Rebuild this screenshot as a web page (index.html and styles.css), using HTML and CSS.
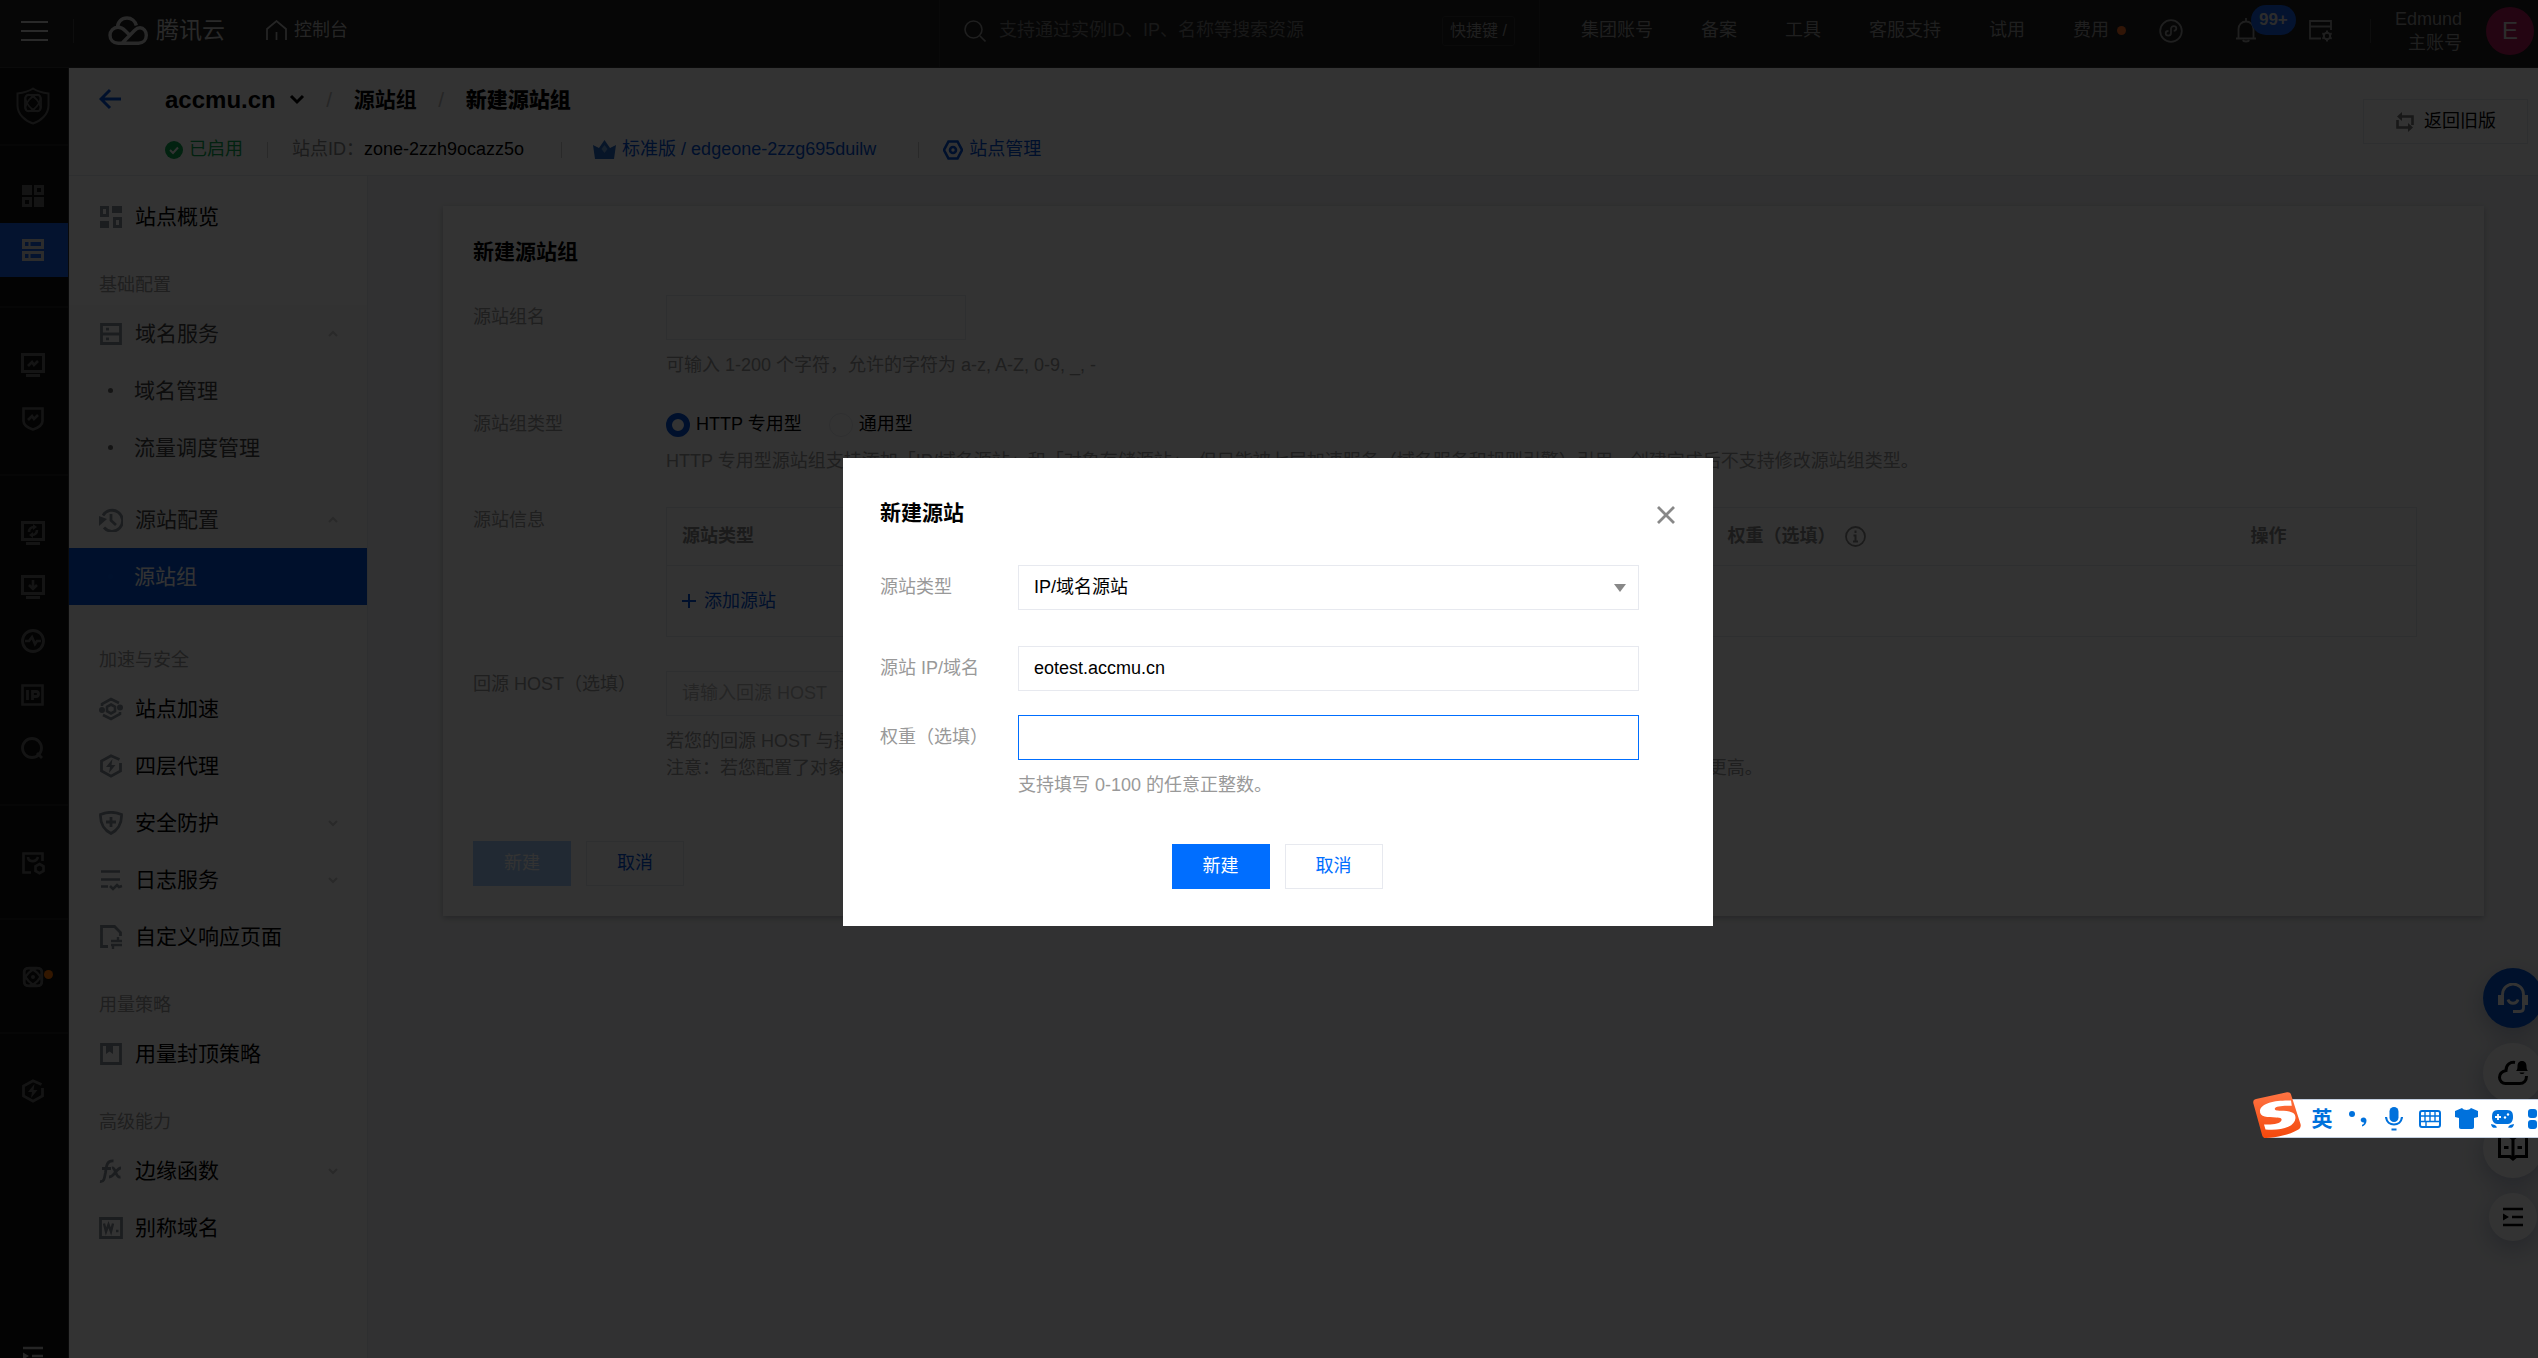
FILE: index.html
```html
<!DOCTYPE html>
<html lang="zh-CN">
<head>
<meta charset="utf-8">
<meta name="viewport" content="width=device-width, initial-scale=1">
<title>新建源站组 - 控制台</title>
<link rel="stylesheet" href="styles.css">
</head>
<body>
<svg class="defs" aria-hidden="true">
  <symbol id="i-monitor" viewBox="0 0 24 24"><path d="M1.500 1.500h21v17h-21zM5 22.500h14" fill="none" stroke="currentColor" stroke-width="3"/></symbol>
  <symbol id="i-bolt" viewBox="0 0 24 24"><path d="M20.500 5.500 12 1.800 2.500 7v10l9.500 5.200 9.500-5.200v-8" fill="none" stroke="currentColor" stroke-width="2.800"/><path d="m13.500 5-6.500 8h4l-1 6 6.500-8h-4z" fill="currentColor"/></symbol>
  <symbol id="i-down" viewBox="0 0 10 8"><path d="m1 2 4 4 4-4" fill="none" stroke="currentColor" stroke-width="2"/></symbol>
  <symbol id="i-up" viewBox="0 0 10 8"><path d="m1 6 4-4 4 4" fill="none" stroke="currentColor" stroke-width="2"/></symbol>
  <symbol id="i-indent" viewBox="0 0 20 20"><path d="M0 2h20M9 10h11M0 18h20" fill="none" stroke="currentColor" stroke-width="2.400"/><path d="M0 6.500 6 10l-6 3.500z" fill="currentColor"/></symbol>
</svg>

<header class="topbar">
  <button class="icon-btn burger" aria-label="菜单"><svg width="27" height="22" viewBox="0 0 27 22"><path d="M0 2h27M0 11h27M0 20h27" stroke="currentColor" stroke-width="2"/></svg></button>
  <span class="vline"></span>
  <a class="brand" href="#">
    <svg width="40" height="29" viewBox="0 0 40 29"><path d="M10 27.200C5 27 2 23.500 2 19.300c0-4.500 3.500-8 8-8 3 0 5 1.200 7.500 3.700l4 4M9.500 11.500C9.500 6 13.500 2 19 2c4.500 0 8.200 3 9.300 7.500M14 27.200 26.500 14.500c2-2 3.500-2.700 5.500-2.700 3.700 0 6.300 3.400 6.300 7.500 0 4.500-3 7.900-7.800 7.900H10" fill="none" stroke="currentColor" stroke-width="3.400"/></svg>
    <span class="brand-name">腾讯云</span>
  </a>
  <a class="console" href="#">
    <svg width="21" height="21" viewBox="0 0 21 21"><path d="M1 20V9l9.500-8L20 9v11M10.500 12v8" fill="none" stroke="currentColor" stroke-width="1.700"/></svg>
    控制台
  </a>
  <div class="search">
    <svg width="22" height="22" viewBox="0 0 22 22"><circle cx="9.500" cy="9.500" r="8.500" fill="none" stroke="currentColor" stroke-width="1.600"/><path d="m16 16 5.500 5.500" stroke="currentColor" stroke-width="1.600"/></svg>
    <input class="search-input" type="text" aria-label="搜索" placeholder="支持通过实例ID、IP、名称等搜索资源">
    <kbd class="hotkey">快捷键 /</kbd>
  </div>
  <nav class="topnav">
    <a href="#">集团账号</a><a href="#">备案</a><a href="#">工具</a><a href="#">客服支持</a><a href="#">试用</a><a class="fee" href="#">费用<i class="dot"></i></a>
  </nav>
  <div class="tools">
    <button class="icon-btn" aria-label="小程序"><svg width="24" height="24" viewBox="0 0 24 24"><circle cx="12" cy="12" r="10.800" fill="none" stroke="currentColor" stroke-width="1.800"/><path d="M9.500 12c-2 0-2.800 1-2.800 2.300s1 2.300 2.500 2.300 2.800-1 2.800-2.600V9.800c0-1.500 1.200-2.600 2.700-2.600s2.600 1 2.600 2.300-.8 2.200-2.600 2.300" fill="none" stroke="currentColor" stroke-width="1.800"/></svg></button>
    <button class="icon-btn bell" aria-label="消息"><svg width="22" height="26" viewBox="0 0 22 26"><path d="M3.500 19.500V11a7.500 7.500 0 0 1 15 0v8.500M1 20.500h20M11 0v3M8 22c.3 2 5.700 2 6 0" fill="none" stroke="currentColor" stroke-width="1.800"/></svg><span class="badge">99+</span></button>
    <button class="icon-btn" aria-label="页面设置"><svg width="24" height="22" viewBox="0 0 24 22"><path d="M12 18.500H1V1h21v9M1 6.500h21" fill="none" stroke="currentColor" stroke-width="1.800"/><circle cx="18" cy="16" r="3.200" fill="none" stroke="currentColor" stroke-width="2"/><path d="M18 10.500v3M18 18.500v3M13.300 13.300l2.500 1.400M20.200 17.300l2.500 1.400M22.700 13.300l-2.500 1.400M15.800 17.300l-2.500 1.400" stroke="currentColor" stroke-width="2"/></svg></button>
  </div>
  <span class="vline"></span>
  <div class="account"><span>Edmund</span><span>主账号</span></div>
  <span class="avatar">E</span>
</header>

<div class="layout">
  <aside class="rail">
    <a class="rail-logo" href="#" aria-label="边缘安全加速平台"><svg width="34" height="38" viewBox="0 0 34 38"><path d="M17 1.500C12 5 6 6 1.500 6.500v12C1.500 27 9 34 17 36.500 25 34 32.500 27 32.500 18.500v-12C28 6 22 5 17 1.500z" fill="none" stroke="currentColor" stroke-width="2"/><g fill="none" stroke="currentColor" stroke-width="1.800"><rect x="9" y="8" width="16" height="16" rx="4"/><ellipse cx="17" cy="16" rx="10" ry="5" transform="rotate(50 17 16)"/><ellipse cx="17" cy="16" rx="10" ry="5" transform="rotate(-50 17 16)"/></g></svg></a>
    <div class="rail-group rail-first">
      <a href="#" aria-label="概览"><svg width="22" height="22" viewBox="0 0 22 22"><path d="M0 0h10v10H0zM12 12h10v10H12z" fill="currentColor"/><path d="M13.500 1.500h7v7h-7zM1.500 13.500h7v7h-7z" fill="none" stroke="currentColor" stroke-width="3"/></svg></a>
      <a class="on" href="#" aria-label="站点列表"><svg width="22" height="22" viewBox="0 0 22 22"><path d="M1.500 1.500h19v7h-19zM1.500 13.500h19v7h-19z" fill="none" stroke="currentColor" stroke-width="3"/><path d="M7.500 3v4M7.500 15v4" stroke="currentColor" stroke-width="2"/></svg></a>
    </div>
    <div class="rail-group">
      <a href="#" aria-label="指标分析"><svg width="24" height="24"><use href="#i-monitor"/><path d="m7 13 4-4 2 3 4-4" fill="none" stroke="currentColor" stroke-width="2.600"/></svg></a>
      <a href="#" aria-label="安全分析"><svg width="24" height="24"><path d="M2.500 1.500h19V14c0 4-5 7-9.500 8.500C7.500 21 2.500 18 2.500 14zM7 13l4-4 2 3 4-4" fill="none" stroke="currentColor" stroke-width="2.600"/></svg></a>
    </div>
    <div class="rail-group">
      <a href="#" aria-label="刷新缓存"><svg width="24" height="24"><use href="#i-monitor"/><path d="M8 11c0-3 2-5 5-5M16 9c0 3-2 5-5 5" fill="none" stroke="currentColor" stroke-width="2.600"/><path d="m12 3 4 3-4 3zM12 11l-4 3 4 3z" fill="currentColor"/></svg></a>
      <a href="#" aria-label="预热缓存"><svg width="24" height="24"><use href="#i-monitor"/><path d="M12 5v8M8 10l4 4 4-4" fill="none" stroke="currentColor" stroke-width="2.600"/></svg></a>
      <a href="#" aria-label="诊断"><svg width="24" height="24"><circle cx="12" cy="12" r="10.500" fill="none" stroke="currentColor" stroke-width="2.800"/><path d="M4 12h4l3-4 3 7 2-3h4" fill="none" stroke="currentColor" stroke-width="2.600"/></svg></a>
      <a href="#" aria-label="IP 查询"><svg width="24" height="24"><path d="M1.500 2.500h20v19h-20z" fill="none" stroke="currentColor" stroke-width="2.600"/><path d="M6.500 7v10M11.500 17V8.500h3.500a2.200 2.200 0 0 1 0 5h-3" fill="none" stroke="currentColor" stroke-width="2.800"/></svg></a>
      <a href="#" aria-label="搜索"><svg width="24" height="24"><circle cx="11" cy="11" r="9.500" fill="none" stroke="currentColor" stroke-width="2.800"/><path d="m16 16 5 5" stroke="currentColor" stroke-width="2.800"/></svg></a>
    </div>
    <div class="rail-group">
      <a href="#" aria-label="套餐"><svg width="24" height="24"><path d="M10 21.500H2.500v-19h19V10M7 6c0 5 8 6 10 0" fill="none" stroke="currentColor" stroke-width="2.600"/><path d="m18.500 13 4 2.300v4.600l-4 2.300-4-2.300v-4.600z" fill="none" stroke="currentColor" stroke-width="2.600"/></svg></a>
    </div>
    <div class="rail-group">
      <a href="#" aria-label="活动"><svg width="24" height="24"><g fill="none" stroke="currentColor" stroke-width="2.400"><rect x="3" y="3" width="18" height="18" rx="5"/><ellipse cx="12" cy="12" rx="11" ry="6" transform="rotate(45 12 12)"/><ellipse cx="12" cy="12" rx="11" ry="6" transform="rotate(-45 12 12)"/></g><circle cx="12" cy="12" r="2" fill="currentColor"/></svg><i class="dot rail-dot"></i></a>
    </div>
    <div class="rail-group">
      <a href="#" aria-label="加速"><svg width="24" height="24"><use href="#i-bolt"/></svg></a>
    </div>
    <a class="rail-foot" href="#" aria-label="展开"><svg width="20" height="20"><use href="#i-indent"/></svg></a>
  </aside>

  <div class="main">
    <div class="pagehead">
      <a class="back" href="#" aria-label="返回"><svg width="22" height="22" viewBox="0 0 22 22"><path d="M11 2 2 11l9 9M2 11h20" fill="none" stroke="currentColor" stroke-width="3"/></svg></a>
      <div class="headinfo">
        <div class="crumbs">
          <button class="site">accmu.cn <svg width="16" height="12" viewBox="0 0 16 12"><path d="m2 2 6 6 6-6" fill="none" stroke="currentColor" stroke-width="3"/></svg></button>
          <span class="slash">/</span><a href="#">源站组</a><span class="slash">/</span><strong>新建源站组</strong>
        </div>
        <div class="meta">
          <span class="enabled"><svg width="18" height="18" viewBox="0 0 18 18"><circle cx="9" cy="9" r="9" fill="currentColor"/><path d="m5 9 3 3 5-5.500" fill="none" stroke="#fff" stroke-width="2"/></svg>已启用</span>
          <span class="bar"></span>
          <span class="zone"><span class="muted">站点ID：</span>zone-2zzh9ocazz5o</span>
          <span class="bar"></span>
          <a class="plan" href="#"><svg width="23" height="19" viewBox="0 0 23 19"><path d="m0 5 6 3 5.500-8L17 8l6-3-2 14H2z" fill="#2468c8"/><path d="m11.500 5 3 4-3 4-3-4z" fill="#7aa8e0"/></svg>标准版 / edgeone-2zzg695duilw</a>
          <span class="bar"></span>
          <a class="manage" href="#"><svg width="20" height="20" viewBox="0 0 20 20"><path d="M5.500 1.500h9L19 10l-4.500 8.500h-9L1 10z" fill="none" stroke="currentColor" stroke-width="2.600"/><circle cx="10" cy="10" r="3" fill="none" stroke="currentColor" stroke-width="2.600"/></svg>站点管理</a>
        </div>
      </div>
      <button class="btn old"><svg width="20" height="20" viewBox="0 0 20 20"><path d="M5 4.500h12.500V13M15 15.500H2.500V8" fill="none" stroke="currentColor" stroke-width="2.600"/><path d="M7 0v9L2 4.500zM13 11v9l5-4.500z" fill="currentColor"/></svg>返回旧版</button>
    </div>

    <div class="body">
      <nav class="side">
        <a class="item" href="#"><svg width="24" height="24"><path d="M2.500 2.500h6v8h-6zM15.500 13.500h6v8h-6z" fill="none" stroke="currentColor" stroke-width="3"/><path d="M13 1h10v7H13zM1 16h9v7H1z" fill="currentColor"/></svg><span>站点概览</span></a>
        <h2 class="group">基础配置</h2>
        <div class="open">
          <a class="item" href="#"><svg width="24" height="24"><path d="M2.500 2.500h19v19h-19zM2 12h20" fill="none" stroke="currentColor" stroke-width="2.800"/><path d="M7 7.200h3M7 16.800h3" stroke="currentColor" stroke-width="2.800"/></svg><span>域名服务</span><svg class="chev" width="10" height="8"><use href="#i-up"/></svg></a>
          <a class="sub" href="#">域名管理</a>
          <a class="sub" href="#">流量调度管理</a>
        </div>
        <div class="open">
          <a class="item" href="#"><svg width="24" height="24"><path d="M4 7.500a10.500 10.500 0 1 1 1 12M12 6v6.500l5 4.500" fill="none" stroke="currentColor" stroke-width="2.800"/><path d="M0 8v10l8-7z" fill="currentColor"/></svg><span>源站配置</span><svg class="chev" width="10" height="8"><use href="#i-up"/></svg></a>
          <a class="sub current" href="#">源站组</a>
        </div>
        <h2 class="group">加速与安全</h2>
        <a class="item" href="#"><svg width="24" height="24"><path d="M3 9V7l9-5 8 4M21 15v2l-9 5-8-4M12 7.500l4 2.300v4.400l-4 2.300-4-2.300V9.800z" fill="none" stroke="currentColor" stroke-width="2.600"/><circle cx="3" cy="13" r="3" fill="currentColor"/><circle cx="21" cy="10.500" r="3" fill="currentColor"/></svg><span>站点加速</span></a>
        <a class="item" href="#"><svg width="24" height="24"><use href="#i-bolt"/></svg><span>四层代理</span></a>
        <a class="item" href="#"><svg width="24" height="24"><path d="M1.500 3.500C8 .8 16 .8 22.500 3.500 23 13 18 19.500 12 22.500 6 19.500 1 13 1.500 3.500zM12 6v10M7 11h10" fill="none" stroke="currentColor" stroke-width="2.800"/></svg><span>安全防护</span><svg class="chev" width="10" height="8"><use href="#i-down"/></svg></a>
        <a class="item" href="#"><svg width="24" height="24"><path d="M2 3.500h19M2 11.500h19M2 18.500h7M11 18l3 3 4-4 2 2 3-1" fill="none" stroke="currentColor" stroke-width="2.600"/></svg><span>日志服务</span><svg class="chev" width="10" height="8"><use href="#i-down"/></svg></a>
        <a class="item" href="#"><svg width="24" height="24"><path d="M9 21.500H2.500v-20h13l6 6V11" fill="none" stroke="currentColor" stroke-width="2.800"/><path d="M12 16h11M19 12v4M12 20h11M14 20v4" fill="none" stroke="currentColor" stroke-width="2.400"/></svg><span>自定义响应页面</span></a>
        <h2 class="group">用量策略</h2>
        <a class="item" href="#"><svg width="24" height="24"><path d="M2.500 2.500h19v19h-19z" fill="none" stroke="currentColor" stroke-width="2.800"/><path d="M7 3h7v9l-3.500-2.500L7 12z" fill="currentColor"/></svg><span>用量封顶策略</span></a>
        <h2 class="group">高级能力</h2>
        <a class="item" href="#"><svg width="24" height="24"><path d="M1 22.500c4 .5 4.500-3 5.500-9 1-8 2-12 8-11.500M3 9.500h9M13 9c4-1 3 10 8.500 9M22 9c-5 0-6 9-12 9" fill="none" stroke="currentColor" stroke-width="2.800"/></svg><span>边缘函数</span><svg class="chev" width="10" height="8"><use href="#i-down"/></svg></a>
        <a class="item" href="#"><svg width="24" height="24"><path d="M1.500 2.500h21v19h-21z" fill="none" stroke="currentColor" stroke-width="2.800"/><path d="m5 7.500 2 8 2.500-7 2.500 7 2-8M17 15h2.500" fill="none" stroke="currentColor" stroke-width="2.400"/></svg><span>别称域名</span></a>
      </nav>

      <main class="content">
        <form class="card">
          <h1 class="title">新建源站组</h1>
          <div class="row">
            <label class="label" for="gname">源站组名</label>
            <div class="field"><input class="input" id="gname" type="text"><p class="hint">可输入 1-200 个字符，允许的字符为 a-z, A-Z, 0-9, _, -</p></div>
          </div>
          <div class="row type-row">
            <span class="label" id="gtype">源站组类型</span>
            <div class="field" role="radiogroup" aria-labelledby="gtype">
              <div class="radios">
                <label><input type="radio" name="type" checked>HTTP 专用型</label>
                <label><input type="radio" name="type">通用型</label>
              </div>
              <p class="hint">HTTP 专用型源站组支持添加「IP/域名源站」和「对象存储源站」，但只能被七层加速服务（域名服务和规则引擎）引用，创建完成后不支持修改源站组类型。</p>
            </div>
          </div>
          <div class="row info-row">
            <span class="label">源站信息</span>
            <div class="field">
              <table class="table">
                <thead><tr><th class="c1">源站类型</th><th class="c2"><span class="th">权重（选填）<svg width="21" height="21" viewBox="0 0 21 21"><circle cx="10.500" cy="10.500" r="9.500" fill="none" stroke="currentColor" stroke-width="1.800"/><path d="M10.500 4.500v2.500M8.500 9.500h2v6M8 15.500h5" fill="none" stroke="currentColor" stroke-width="2"/></svg></span></th><th>操作</th></tr></thead>
                <tbody><tr><td colspan="3"><button class="add" type="button"><svg width="14" height="14" viewBox="0 0 14 14"><path d="M7 0v14M0 7h14" stroke="currentColor" stroke-width="2"/></svg>添加源站</button></td></tr></tbody>
              </table>
            </div>
          </div>
          <div class="row host-row">
            <label class="label" for="ghost">回源 HOST（选填）</label>
            <div class="field"><input class="input" id="ghost" type="text" placeholder="请输入回源 HOST"><p class="hint">若您的回源 HOST 与接入的加速域名不一致，请在此填写实际的回源 HOST。<br>注意：若您配置了对象存储源站，回源时将使用对象存储源站的域名作为回源 HOST，规则引擎中配置的 HOST Header 重写优先级更高。</p></div>
          </div>
          <div class="actions"><button class="btn primary" type="button" disabled>新建</button><button class="btn" type="button">取消</button></div>
        </form>
      </main>
    </div>
  </div>
</div>

<div class="floaters">
  <button class="fab fab-blue" aria-label="客服"><svg width="30" height="30" viewBox="0 0 30 30"><path d="M4.500 13v-1.500a10.500 10.500 0 0 1 21 0V25c0 2-1 3.500-3.500 3.500h-7" fill="none" stroke="currentColor" stroke-width="2.800"/><path d="M0 12h6v10H0zM24 12h6v10h-6z" fill="currentColor"/><path d="M10 16.500c1.500 5 8.500 5 10 0" fill="none" stroke="currentColor" stroke-width="2.800"/></svg></button>
  <button class="fab" aria-label="云通知"><svg width="30" height="26" viewBox="0 0 30 26"><path d="M17 2.500c-4.500-.8-9 2-9 8C3.500 11.500 1.500 14 1.500 17.500s3 6 6 6h14c4.500 0 7-3 7-7.500" fill="none" stroke="currentColor" stroke-width="3"/><path d="M18 11c1-1 1.500-2 1.500-4.500 0-4 2-5.500 4.500-5.500s4.500 1.500 4.500 5.500C28.500 9 29 10 30 11zM21.500 12.500h5c-.8 2-4.200 2-5 0z" fill="currentColor"/></svg></button>
  <button class="fab" aria-label="文档"><svg width="30" height="30" viewBox="0 0 30 30"><path d="M1.500 3.500H12l3 2.500 3-2.500h10.500v20H18l-3 2.500-3-2.500H1.500zM15 6v20" fill="none" stroke="currentColor" stroke-width="3"/><path d="M6 14.500h4.500M19.500 14.500H24" stroke="currentColor" stroke-width="3"/></svg></button>
  <button class="fab fab-small" aria-label="收起"><svg width="20" height="20"><use href="#i-indent"/></svg></button>
</div>

<div class="mask">
  <form class="modal" role="dialog" aria-modal="true" aria-labelledby="mtitle">
    <div class="modal-head"><h2 class="title" id="mtitle">新建源站</h2><button class="close" type="button" aria-label="关闭"><svg width="18" height="18" viewBox="0 0 18 18"><path d="m1 1 16 16M17 1 1 17" stroke="currentColor" stroke-width="2.800"/></svg></button></div>
    <div class="mrow mrow-wide"><label for="otype">源站类型</label><div class="select"><select class="input" id="otype"><option>IP/域名源站</option></select><svg class="caret" width="12" height="8" viewBox="0 0 12 8"><path d="M0 0h12L6 8z" fill="currentColor"/></svg></div></div>
    <div class="mrow"><label for="oip">源站 IP/域名</label><input class="input" id="oip" type="text" value="eotest.accmu.cn"></div>
    <div class="mrow"><label for="oweight">权重（选填）</label><div class="mfield"><input class="input focus" id="oweight" type="text"><p class="hint">支持填写 0-100 的任意正整数。</p></div></div>
    <div class="modal-foot"><button class="btn primary" type="button">新建</button><button class="btn" type="button">取消</button></div>
  </form>
</div>

<div class="ime">
  <svg class="ime-logo" width="48" height="46" viewBox="0 0 48 46"><defs><linearGradient id="g" x2="0" y2="1"><stop offset="0" stop-color="#ff7443"/><stop offset="1" stop-color="#f4480c"/></linearGradient></defs><path d="M3 7 34 .3c2-.4 3.500.5 4 2.200L47.500 32c.7 2.500-.3 4.500-2.500 5.800C36 43 24 45.500 13 46c-2 .1-3.300-.8-3.800-2.600L.4 11.500C-.2 9 .8 7.500 3 7z" fill="url(#g)"/><path d="M38 8.500C24 8 8 10.500 7 18.500c-.8 7 8 6.500 16 7 5 .3 6 1 5.500 2.800C27.500 32 19 33 11 32.500l1.500 5C28 39 42 35 42.500 26c.3-6-6-7-15-7.200-4-.1-6-.5-5.700-2.200.5-2.600 9-3.300 17-2.800z" fill="#fff"/></svg>
  <span class="ime-lang">英</span>
  <svg width="18" height="18" viewBox="0 0 18 18"><circle cx="3" cy="4" r="3" fill="currentColor"/><path d="M14.500 7.500c2 0 3 1.500 3 3.300 0 3-2 5.300-4.500 5.700v-1.700c1.200-.4 2-1.200 2.200-2.300-2 .3-3.500-.8-3.500-2.500 0-1.500 1.200-2.500 2.800-2.500z" fill="currentColor"/></svg>
  <svg width="18" height="24" viewBox="0 0 18 24"><rect x="4.500" y="0" width="9" height="15" rx="4.500" fill="currentColor"/><path d="M1 10c1 10 15 10 16 0M6.500 22.500h5" fill="none" stroke="currentColor" stroke-width="2.200"/></svg>
  <svg width="22" height="18" viewBox="0 0 22 18"><rect x="1" y="1" width="20" height="16" rx="2" fill="none" stroke="currentColor" stroke-width="2"/><path d="M1 6h20M1 11.500h20M6 1v10M11 1v10M16 1v10M7 11v6" stroke="currentColor" stroke-width="1.400"/></svg>
  <svg width="23" height="21" viewBox="0 0 23 21"><path d="M0 3 7 0c1.500 2.500 7.500 2.500 9 0l7 3v6l-4 1v9c0 1-.7 2-2 2H6c-1.300 0-2-1-2-2v-9L0 9z" fill="currentColor"/></svg>
  <svg width="23" height="18" viewBox="0 0 23 18"><path d="M7 0h9c5 0 6 3 6 7s-2 7-5 7H6c-3 0-5-3-5-7s1-7 6-7z" fill="currentColor"/><path d="M7 4v6M4 7h6" stroke="#fff" stroke-width="1.800"/><circle cx="14" cy="7.500" r="1.200" fill="#fff"/><circle cx="17" cy="4.500" r="1.200" fill="#fff"/><path d="M0 14c3 .5 5 1 6 3.500-3 .8-5.500.5-6-3.500zM23 14c-3 .5-5 1-6 3.500 3 .8 5.500.5 6-3.500z" fill="currentColor"/></svg>
  <svg width="20" height="20" viewBox="0 0 20 20"><g fill="currentColor"><rect width="9" height="9" rx="3"/><rect y="11" width="9" height="9" rx="3"/><rect x="11" width="9" height="9" rx="3"/><rect x="11" y="11" width="9" height="9" rx="3"/></g></svg>
</div>
</body>
</html>
```
FILE: styles.css
```css
* { box-sizing: border-box; }

body {
  margin: 0;
  min-height: 100vh;
  overflow-x: hidden;
  background: #f5f6f8;
  color: #000;
  font: 18px/27px "Liberation Sans", "Noto Sans CJK SC", sans-serif;
}

h1, h2, p { margin: 0; }
a { color: inherit; text-decoration: none; }
button, input, select { font: inherit; color: inherit; }
button { padding: 0; border: 0; background: none; cursor: pointer; }
svg { display: block; flex: none; }
.defs { position: absolute; width: 0; height: 0; }

/* Top bar */
.topbar {
  display: flex;
  align-items: center;
  height: 68px;
  padding: 0 4px 6px 21px;
  background: #1e1e1e;
  border-bottom: 1px solid #333;
  color: #999;
}
.icon-btn { position: relative; }
.burger { color: #ccc; }
.vline { width: 1px; height: 24px; background: #444; }
.burger + .vline { margin: 0 34px 0 25px; }
.brand { display: flex; align-items: center; gap: 8px; color: #ccc; }
.brand-name { font-size: 23px; }
.console { display: flex; align-items: center; gap: 7px; margin-left: 41px; color: #bbb; }
.search {
  display: flex;
  align-items: center;
  align-self: stretch;
  flex: 0 0 601px;
  gap: 13px;
  margin: 0 41px -6px auto;
  padding: 0 24px 6px;
  border: solid #303030;
  border-width: 0 1px;
}
.search-input {
  flex: 1;
  min-width: 0;
  padding: 0;
  border: 0;
  background: none;
  outline: 0;
}
.search-input::placeholder { color: #777; }
.hotkey {
  padding: 0 7px;
  border: 1px solid #333;
  border-radius: 3px;
  font: 16px/28px "Liberation Sans", "Noto Sans CJK SC", sans-serif;
}
.topnav { display: flex; gap: 48px; }
.fee { display: flex; align-items: center; gap: 8px; }
.dot { width: 9px; height: 9px; border-radius: 50%; background: #f26a21; }
.tools { display: flex; align-items: center; gap: 52px; margin: 0 37px 0 33px; }
.badge {
  position: absolute;
  left: 16px;
  top: -13px;
  padding: 0 8px;
  border-radius: 15px;
  background: #1660e8;
  color: #ddd;
  font: bold 17px/30px "Liberation Sans", sans-serif;
}
.account {
  display: flex;
  flex-direction: column;
  align-items: flex-end;
  margin: 0 24px 0 24px;
  line-height: 24px;
}
.avatar {
  width: 48px;
  border-radius: 50%;
  background: #b5195a;
  color: #ddd;
  font-size: 24px;
  line-height: 48px;
  text-align: center;
}

/* Product rail */
.layout { display: flex; min-height: calc(100vh - 68px); }
.rail {
  display: flex;
  flex-direction: column;
  flex: 0 0 69px;
  border-right: 1px solid #333;
  background: #0f0f0f;
  color: #666;
}
.rail a { position: relative; display: flex; align-items: center; justify-content: center; height: 54px; padding-right: 2px; }
.rail .rail-logo { height: 76px; }
.rail-group { padding: 30px 0 28px; border-top: 2px solid #1e1e1e; }
.rail-first { padding-top: 23px; padding-bottom: 29px; }
.rail .on { background: #1660e8; color: #ddd; }
.rail-dot { position: absolute; left: 44px; top: 20px; background: #ff7200; }
.rail .rail-foot { align-items: flex-start; height: 12px; margin-top: auto; overflow: hidden; color: #bbb; }

/* Page heading */
.main { flex: 1; min-width: 0; display: flex; flex-direction: column; }
.pagehead {
  display: flex;
  height: 108px;
  padding: 18px 10px 0 30px;
  border-bottom: 1px solid #e7eaef;
  background: #fff;
}
.back { height: 22px; margin: 2px 44px 0 0; color: #0052d9; }
.headinfo { flex: 1; }
.crumbs { display: flex; align-items: center; height: 27px; font-size: 21px; font-weight: bold; }
.site { display: flex; align-items: center; gap: 13px; font-size: 24px; }
.slash { width: 49px; text-align: center; color: #bbb; font-weight: normal; }
.meta { display: flex; align-items: center; height: 27px; margin-top: 23px; }
.meta span, .meta a { display: flex; align-items: center; }
.enabled { gap: 6px; color: #0aa84f; }
.meta .bar { width: 1px; height: 16px; margin: 0 24px; background: #ccc; }
.meta .zone + .bar { margin: 0 31px 0 37px; }
.meta .plan + .bar { margin: 0 24px 0 42px; }
.zone, .plan, .manage { gap: 6px; }
.zone { gap: 0; }
.plan, .manage { color: #0052d9; }
.muted { color: #888; }
.btn {
  min-width: 98px;
  height: 45px;
  border: 1px solid #e7e9ef;
  background: #fff;
  color: #006eff;
}
.primary { border-color: #006eff; background: #006eff; color: #fff; }
.primary:disabled { border-color: #a5cdff; background: #a5cdff; }
.card .btn:not(:disabled), .add { color: #0052d9; }
.old {
  display: flex;
  align-items: center;
  justify-content: center;
  gap: 9px;
  width: 165px;
  margin-top: 13px;
  color: #000;
}
.old svg { color: #777; }

/* Side menu */
.body { flex: 1; display: flex; }
.side { flex: 0 0 299px; padding-top: 12px; border-right: 1px solid #e7eaef; background: #fff; font-size: 21px; }
.item { display: flex; align-items: center; gap: 12px; height: 57px; padding: 0 29px 0 30px; }
.item svg { color: #888f99; }
.item .chev { margin-left: auto; color: #ccc; }
.group { height: 60px; padding: 27px 30px 0; color: #999; font-size: 18px; font-weight: normal; }
.open { padding-bottom: 15px; background: #fafafa; color: #444; }
.sub { display: flex; align-items: center; gap: 21px; height: 57px; padding-left: 39px; }
.sub::before { content: ""; width: 5px; height: 5px; border-radius: 50%; background: #666; }
.current { background: #0052d9; color: #fff; }
.current::before { background: #0058e0; }

/* Form card */
.content { flex: 1; min-width: 0; padding: 30px 54px 30px 75px; }
.card { padding: 32px 67px 30px 30px; background: #fff; box-shadow: 0 2px 6px rgba(54, 58, 80, .32); }
.title { font-size: 21px; line-height: 28px; }
.row { display: flex; margin-top: 29px; }
.label { flex: 0 0 193px; padding-top: 9px; color: #999; }
.field { flex: 1; min-width: 0; }
.input {
  display: block;
  width: 300px;
  height: 45px;
  padding: 0 15px;
  border: 1px solid #e7e9ef;
  border-radius: 0;
  outline: 0;
  background: #fff;
}
.input::placeholder { color: #bbb; }
.hint { margin-top: 12px; color: #999; }
.type-row { margin-top: 32px; }
.type-row .label { padding-top: 0; }
.radios { display: flex; gap: 27px; }
.radios label { display: flex; align-items: center; gap: 6px; }
.radios input {
  appearance: none;
  width: 24px;
  height: 24px;
  margin: 0;
  border: 1px solid #e7e9ef;
  border-radius: 50%;
}
.radios input:checked { border: 6px solid #0052d9; }
.type-row .hint { margin-top: 10px; }
.info-row { margin-top: 32px; }
.info-row .label { padding-top: 0; }
.table { width: 100%; border: 1px solid #e7eaef; border-collapse: collapse; text-align: left; table-layout: fixed; }
.table th { height: 58px; padding: 0 15px; border-bottom: 1px solid #e7eaef; color: #888; }
.table td { height: 71px; padding: 0 15px; }
.c1 { width: 1046px; }
.c2 { width: 523px; }
.th { display: flex; align-items: center; gap: 9px; }
.add { display: flex; align-items: center; gap: 8px; }
.host-row { margin-top: 34px; }
.host-row .label { padding-top: 0; }
.actions { display: flex; gap: 15px; margin-top: 59px; }

/* Floating helpers */
.floaters {
  position: fixed;
  right: -5px;
  bottom: 117px;
  display: flex;
  flex-direction: column;
  align-items: center;
  gap: 15px;
}
.fab {
  display: flex;
  align-items: center;
  justify-content: center;
  width: 60px;
  height: 60px;
  border-radius: 50%;
  background: #fff;
  box-shadow: 0 8px 24px rgba(40, 60, 120, .3);
}
.fab-blue { background: #0058dc; color: #fff; }
.fab-small { width: 48px; height: 48px; }

/* Dialog */
.mask {
  position: fixed;
  inset: 0;
  display: flex;
  align-items: center;
  justify-content: center;
  padding: 26px 0 0 18px;
  background: rgba(0, 0, 0, .8);
}
.modal { width: 870px; padding: 41px 37px 37px; background: #fff; }
.modal-head { display: flex; align-items: center; justify-content: space-between; margin: 0 1px 38px 0; }
.close { padding-top: 3px; color: #888; }
.mrow { display: flex; margin: 0 37px 24px 0; }
.mrow-wide { margin-bottom: 36px; }
.mrow label { flex: 0 0 138px; padding-top: 9px; color: #999; }
.mrow .input, .mfield, .select { width: 100%; }
.select { position: relative; }
.select select { appearance: none; }
.caret { position: absolute; right: 13px; top: 19px; color: #888; }
.mrow .focus { border-color: #006eff; }
.modal-foot { display: flex; justify-content: center; gap: 15px; margin: 45px 2px 0 0; }

/* Input method bar */
.ime {
  position: fixed;
  right: -18px;
  bottom: 220px;
  display: grid;
  grid-template-columns: repeat(7, 36px);
  align-items: center;
  justify-items: center;
  height: 39px;
  padding-left: 39px;
  border: solid #c3cfe0;
  border-width: 1px 0;
  background: #fff;
  color: #0071dc;
}
.ime-logo { position: absolute; left: -12px; top: -8px; }
.ime-lang { font-size: 21px; font-weight: bold; }
```
